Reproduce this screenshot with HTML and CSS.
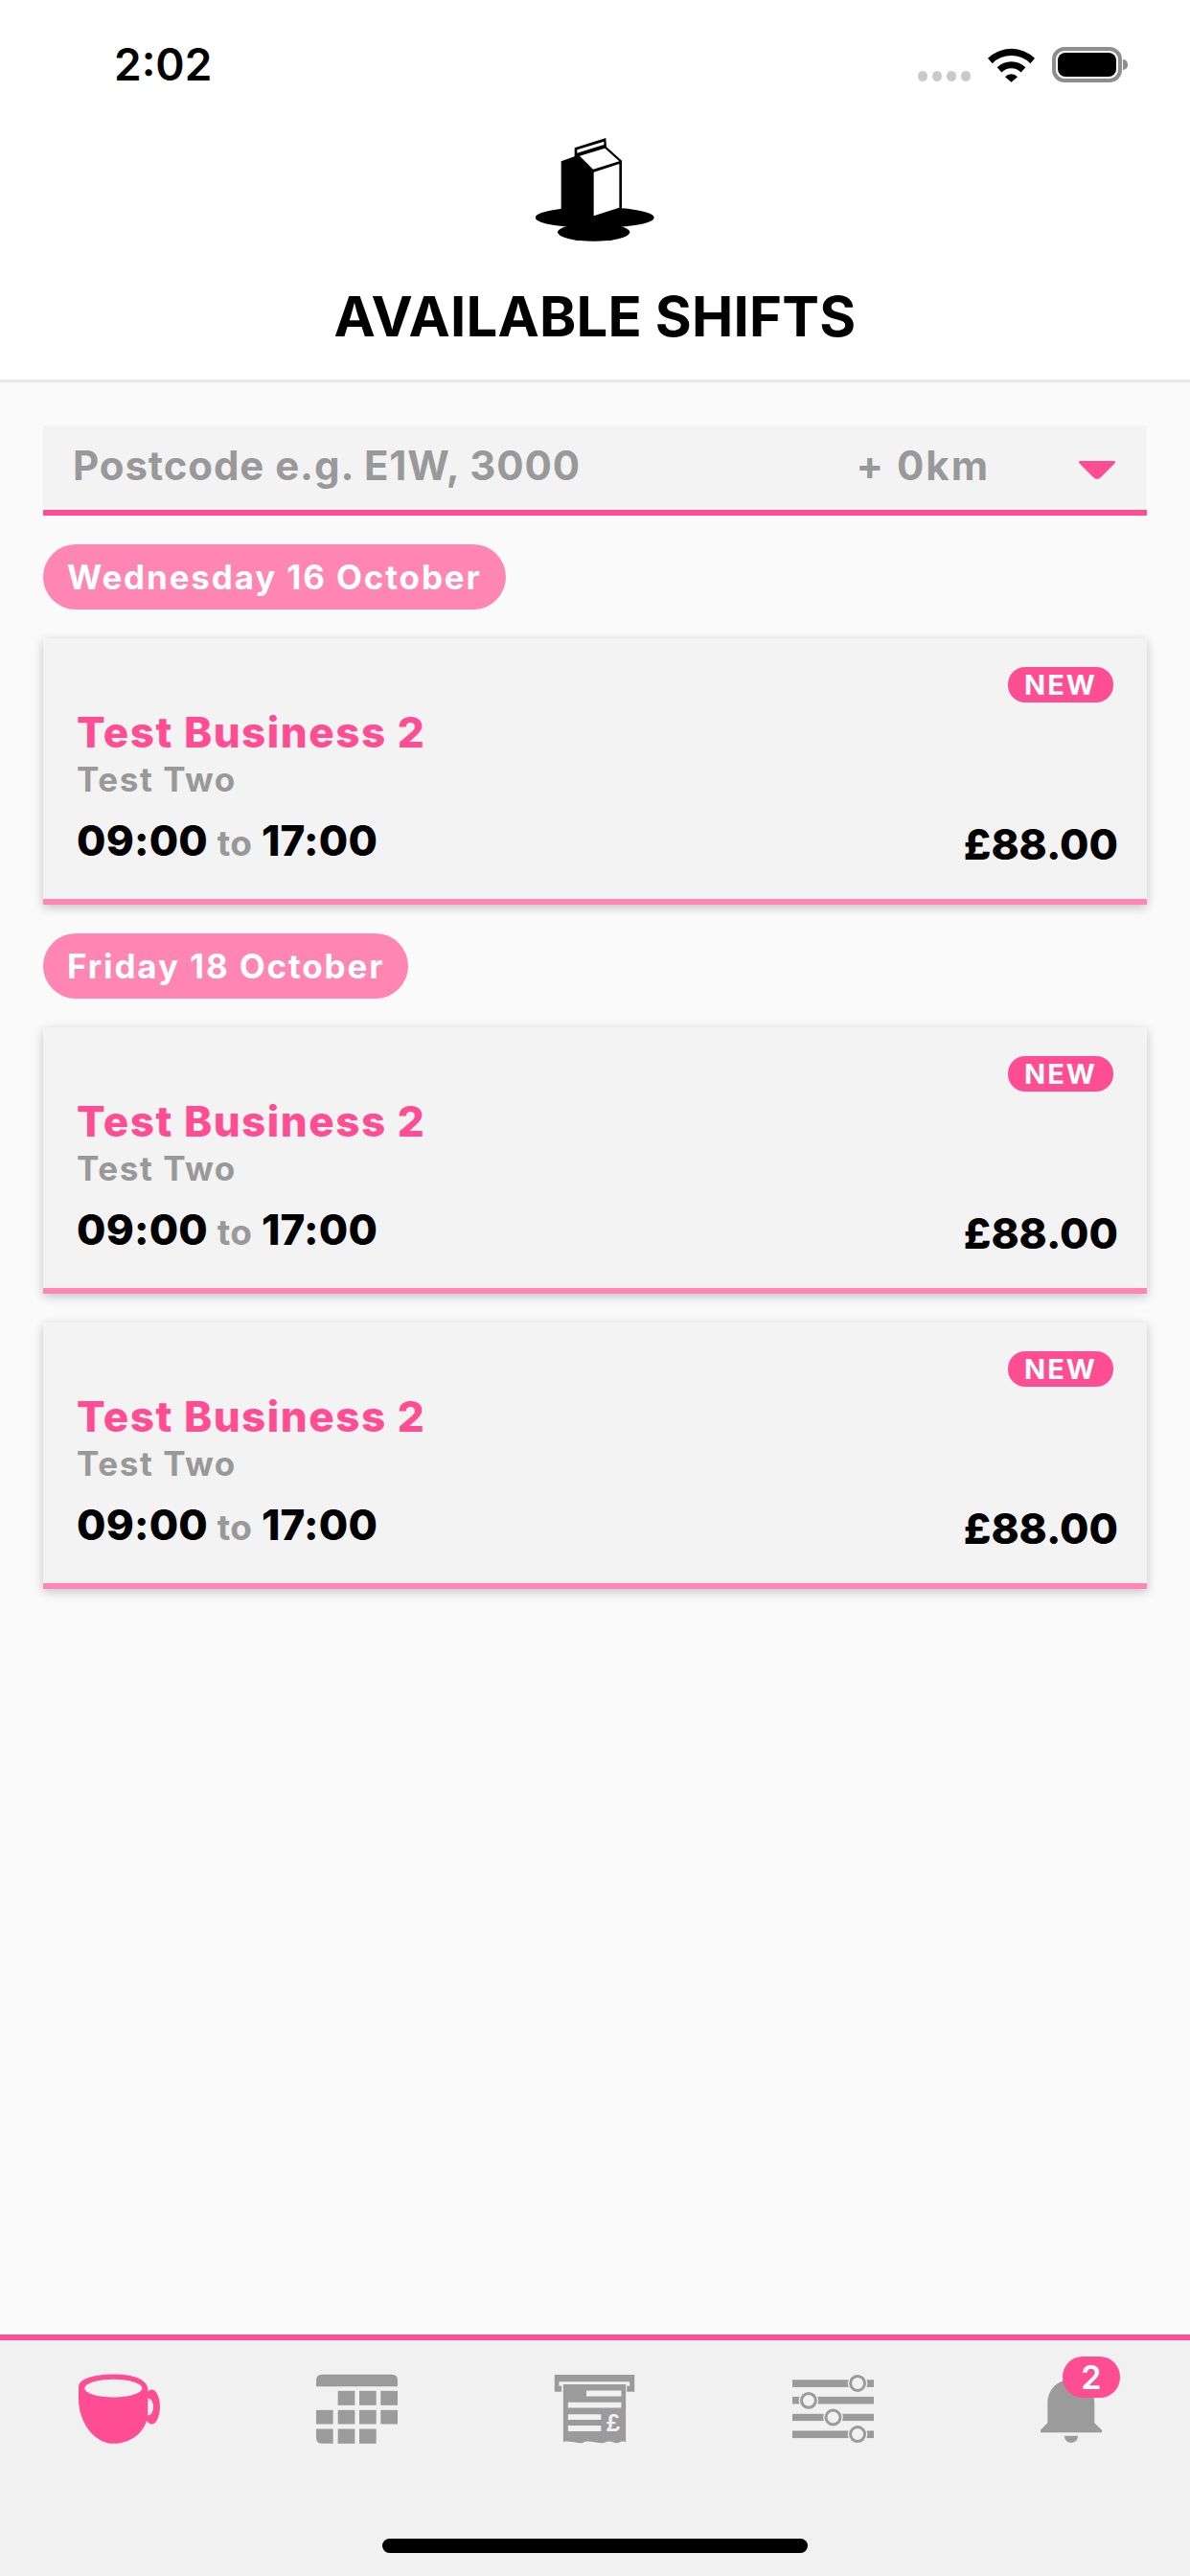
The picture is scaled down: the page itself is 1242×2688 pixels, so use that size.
FILE: index.html
```html
<!DOCTYPE html>
<html lang="en">
<head>
<meta charset="utf-8">
<title>Available Shifts</title>
<link rel="stylesheet" href="styles.css">
</head>
<body>
<div class="app">
  <header class="header">
    <div class="status">
      <span class="clock">2:02</span>
      <div class="status-icons">
        <div class="dots"><i></i><i></i><i></i><i></i></div>
        <svg class="wifi" viewBox="333 58 147 107"><path d="M333 90A105 105 0 0 1 480 90L466 106A84 84 0 0 0 347 106Z M362 118A64 64 0 0 1 451 118L437 134A43 43 0 0 0 376 134Z M387 148A26 26 0 0 1 426 148L406.500 165Z"/></svg>
        <div class="battery"><div class="battery-level"></div></div>
      </div>
    </div>
    <svg class="logo" viewBox="178 72 372 324">
      <ellipse cx="363" cy="321" rx="186" ry="33"/>
      <ellipse cx="360" cy="367" rx="113" ry="28"/>
      <path d="M258 145L300 130V103L398 72L400 100L448 143V290L358 322H258Z"/>
      <path class="white" d="M308 109L392 83V93L308 119Z M316 128L395 104L440 145L358 170Z M360 179L440 153V290L360 316Z"/>
    </svg>
    <h1 class="title">AVAILABLE SHIFTS</h1>
  </header>

  <main class="content">
    <div class="filter">
      <span class="postcode">Postcode e.g. E1W, 3000</span>
      <span class="radius">+ 0km</span>
      <svg class="caret" viewBox="0 0 40 20"><path d="M3 0H37Q41 0 38 3L24 17Q20 21 16 17L2 3Q-1 0 3 0Z"/></svg>
    </div>

    <div class="date-pill">Wednesday 16 October</div>
    <article class="card">
      <span class="new">NEW</span>
      <h2 class="business">Test Business 2</h2>
      <p class="role">Test Two</p>
      <div class="card-foot">
        <span class="hours">09:00 <small>to</small> 17:00</span>
        <span class="price">£88.00</span>
      </div>
    </article>

    <div class="date-pill">Friday 18 October</div>
    <article class="card">
      <span class="new">NEW</span>
      <h2 class="business">Test Business 2</h2>
      <p class="role">Test Two</p>
      <div class="card-foot">
        <span class="hours">09:00 <small>to</small> 17:00</span>
        <span class="price">£88.00</span>
      </div>
    </article>
    <article class="card">
      <span class="new">NEW</span>
      <h2 class="business">Test Business 2</h2>
      <p class="role">Test Two</p>
      <div class="card-foot">
        <span class="hours">09:00 <small>to</small> 17:00</span>
        <span class="price">£88.00</span>
      </div>
    </article>
  </main>

  <nav class="tabbar">
    <div class="tabs">
      <div class="tab">
        <svg class="icon icon-active" viewBox="63 52 255 218">
          <ellipse cx="292" cy="155" rx="26" ry="54"/>
          <ellipse class="hole" cx="281" cy="155" rx="16" ry="27"/>
          <path d="M63 92C63 68 110 53 172 53C234 53 280 68 280 103V170C280 230 230 270 172 270C110 270 63 200 63 130Z"/>
          <ellipse class="hole" cx="172" cy="97" rx="90" ry="28"/>
        </svg>
      </div>
      <div class="tab">
        <svg class="icon" viewBox="60 52 255 218">
          <path d="M78 54H297Q315 54 315 72V91H60V72Q60 54 78 54Z"/>
          <rect x="128" y="105" width="53" height="45"/><rect x="195" y="105" width="53" height="45"/><rect x="262" y="105" width="53" height="45"/>
          <rect x="60" y="165" width="53" height="44"/><rect x="128" y="165" width="53" height="44"/><rect x="195" y="165" width="53" height="44"/><rect x="262" y="165" width="53" height="44"/>
          <path d="M60 224H113V270H78Q60 270 60 252Z"/><rect x="128" y="224" width="53" height="46"/><rect x="195" y="224" width="53" height="46"/>
        </svg>
      </div>
      <div class="tab">
        <svg class="icon" viewBox="58 52 249 218">
          <path d="M58 55H307V108H283V90H292V77H72V90H80V108H58Z"/>
          <path d="M85 85H280V265Q270 260 262 265T240 265T218 265T182 265T150 265T118 265T85 265Z"/>
          <path class="hole" d="M157 104H266V122H157Z M100 141H266V158H100Z M100 178H203V195H100Z M100 213H203V231H100Z"/>
          <text class="pound" x="241" y="232">£</text>
        </svg>
      </div>
      <div class="tab">
        <svg class="icon" viewBox="50 52 256 218">
          <rect x="50" y="70" width="256" height="23"/><rect x="50" y="123" width="256" height="23"/><rect x="50" y="177" width="256" height="22"/><rect x="50" y="230" width="256" height="23"/>
          <circle class="hole" cx="255" cy="81" r="31"/><circle class="hole" cx="101" cy="135" r="31"/><circle class="hole" cx="178" cy="188" r="31"/><circle class="hole" cx="255" cy="241" r="31"/>
          <g class="ring"><circle cx="255" cy="81" r="22.500"/><circle cx="101" cy="135" r="22.500"/><circle cx="178" cy="188" r="22.500"/><circle cx="255" cy="241" r="22.500"/></g>
        </svg>
      </div>
      <div class="tab">
        <div class="bell">
          <svg class="bell-icon" viewBox="78 100 192 197">
            <path d="M100 174C100 130 130 100 174 100C218 100 247 130 247 174V235L270 258V265H78V258L100 235Z"/>
            <path d="M153 276H195C195 290 186 297 174 297C162 297 153 290 153 276Z"/>
          </svg>
          <span class="badge">2</span>
        </div>
      </div>
    </div>
    <div class="home"></div>
  </nav>
</div>
</body>
</html>
```
FILE: styles.css
```css
* { box-sizing: border-box; }
html, body { margin: 0; padding: 0; }
body { background: #fafafa; font-family: "Inter", "Liberation Sans", sans-serif; }
h1, h2, p { margin: 0; }

.app { width: 1242px; height: 2688px; display: flex; flex-direction: column; overflow: hidden; }

/* Header */
.header { height: 399px; background: #fff; border-bottom: 3px solid #e8e8e8; display: flex; flex-direction: column; align-items: center; flex: none; }
.status { width: 100%; height: 144px; display: flex; justify-content: space-between; align-items: flex-start; padding: 39px 71px 0 119px; }
.clock { font-size: 46px; line-height: 56px; font-weight: 600; color: #000; }
.status-icons { display: flex; align-items: flex-end; padding-top: 10px; }
.dots { display: flex; gap: 5px; margin: 0 18px 1px 0; }
.dots i { width: 10px; height: 11px; border-radius: 50%; background: #c9c9c9; }
.wifi { width: 49px; height: 36px; margin-right: 18px; }
.battery { position: relative; width: 73px; height: 37px; border: 4px solid #8e8e8e; border-radius: 13px; padding: 2px; }
.battery::after { content: ""; position: absolute; right: -10px; top: 9px; width: 5px; height: 11px; background: #8e8e8e; border-radius: 0 6px 6px 0; }
.battery-level { width: 100%; height: 100%; background: #000; border-radius: 8px; }
.logo { width: 124px; height: 108px; flex: none; }
.logo .white { fill: #fff; }
.title { margin-top: 45px; font-size: 58px; line-height: 66px; font-weight: 700; letter-spacing: .2px; color: #000; white-space: nowrap; }

/* Content */
.content { flex: 1; padding: 45px 45px 0; display: flex; flex-direction: column; align-items: flex-start; gap: 30px; }
.filter { width: 100%; height: 94px; background: #f3f3f3; border-bottom: 6px solid #ff4d94; display: flex; align-items: center; padding: 0 32px 6px 31px; color: #999; font-size: 42px; font-weight: 700; letter-spacing: .9px; flex: none; }
.postcode { flex: 1; }
.radius { margin-right: 92px; letter-spacing: 2px; }
.caret { width: 40px; height: 20px; fill: #ff4d94; margin-top: 12px; }
.date-pill { height: 68px; padding: 0 25px; border-radius: 34px; background: #ff85b3; color: #fff; font-size: 35px; font-weight: 700; letter-spacing: 1.85px; line-height: 68px; white-space: nowrap; flex: none; }
.card { width: 100%; height: 278px; flex: none; background: #f3f3f3; border-bottom: 6px solid #ff85b3; box-shadow: 0 3px 10px rgba(0,0,0,.22); padding: 30px 30px 0 35px; display: flex; flex-direction: column; position: relative; }
.new { align-self: flex-end; margin-right: 5px; height: 37px; width: 110px; text-align: center; border-radius: 18px; background: #ff4d94; color: #fff; font-size: 29px; letter-spacing: 2px; line-height: 37px; font-weight: 700; }
.business { color: #ff4d94; font-size: 44px; letter-spacing: 1.5px; line-height: 50px; font-weight: 800; margin-top: 6px; }
.role { color: #999; font-size: 35px; letter-spacing: 1.6px; line-height: 42px; font-weight: 700; margin-top: 3px; }
.card-foot { display: flex; justify-content: space-between; align-items: flex-end; margin-top: 18px; color: #000; }
.hours { font-size: 44px; line-height: 50px; font-weight: 800; letter-spacing: .2px; }
.hours small { color: #999; font-size: 37px; font-weight: 700; }
.price { font-size: 44px; line-height: 50px; font-weight: 800; position: relative; top: 1px; }

/* Tab bar */
.tabbar { flex: none; height: 252px; background: #f1f1f1; border-top: 6px solid #ff4d94; padding-top: 35px; position: relative; }
.tabs { display: grid; grid-template-columns: repeat(5, 1fr); align-items: end; height: 73px; }
.tab { display: flex; justify-content: center; align-items: flex-end; }
.icon { width: 85px; height: 73px; fill: #9b9b9b; display: block; }
.icon-active { fill: #ff4d94; }
.icon .hole { fill: #f1f1f1; }
.ring { fill: #f1f1f1; stroke: #9b9b9b; stroke-width: 9; }
.pound { fill: #f1f1f1; font-family: "Liberation Sans", sans-serif; font-size: 76px; font-weight: 700; text-anchor: middle; }
.bell { position: relative; width: 64px; height: 66px; margin-bottom: 1px; }
.bell-icon { width: 64px; height: 66px; fill: #9b9b9b; display: block; }
.badge { position: absolute; left: 23px; top: -24px; width: 60px; height: 43px; border-radius: 21px; background: #ff4d94; color: #fff; font-size: 34px; line-height: 43px; font-weight: 600; text-align: center; }
.home { position: absolute; left: 399px; top: 207px; width: 444px; height: 15px; border-radius: 8px; background: #000; }
```
